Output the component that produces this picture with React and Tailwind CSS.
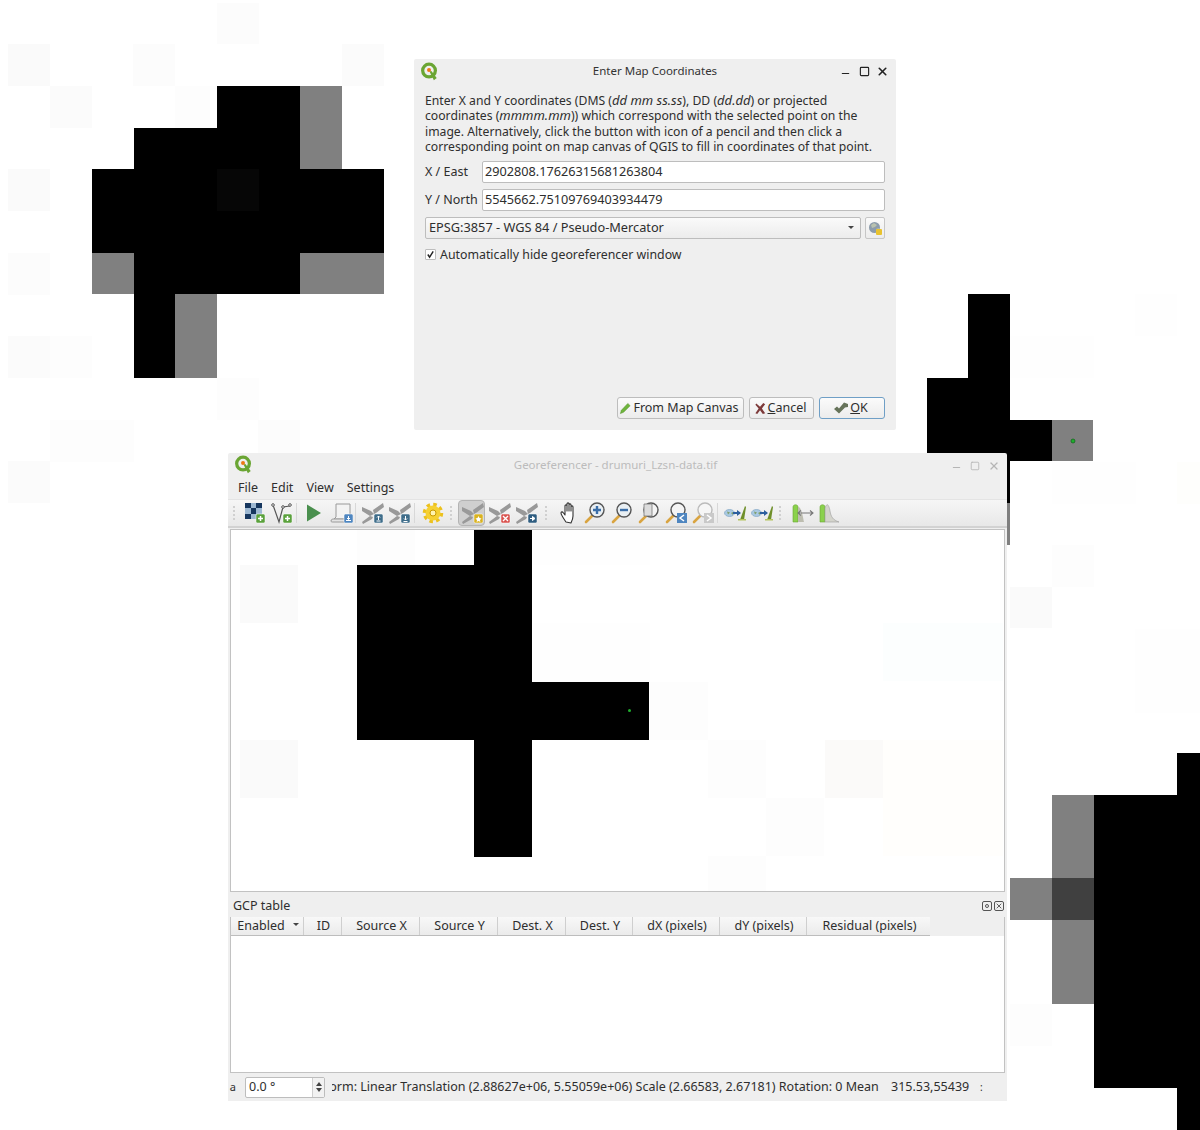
import { X, Minus, Square } from 'lucide-react';

const font = { fontFamily: '"Noto Sans", sans-serif' };

// raster tiles behind the windows: x, y, w, h, colour
const desktopTiles = [
  [8, 44, 42, 42, '#fafafa'], [50, 86, 42, 42, '#fbfbfb'], [133, 44, 42, 42, '#fcfcfc'], [217, 3, 42, 41, '#fcfcfc'],
  [342, 44, 42, 42, '#fbfbfb'], [175, 86, 42, 42, '#fdfdfd'], [8, 169, 42, 42, '#fafafa'], [8, 336, 42, 42, '#fbfbfb'],
  [8, 253, 42, 42, '#fcfcfc'], [50, 336, 42, 42, '#fdfdfd'], [50, 420, 84, 42, '#fdfdfd'], [8, 461, 42, 42, '#fbfbfb'],
  [217, 378, 42, 42, '#fdfdfd'], [258, 420, 42, 33, '#fcfcfc'], [1010, 587, 42, 41, '#fafafa'], [1052, 545, 42, 42, '#fdfdfd'],
  [1010, 336, 84, 42, '#fefefe'], [1135, 294, 42, 42, '#fefefe'], [1052, 462, 84, 42, '#fefefe'], [1177, 462, 23, 42, '#fefefc'],
  [1010, 1004, 42, 42, '#fdfdfd'], [1135, 629, 65, 84, '#fefefe'],
];
const desktopShapes = [
  // left blob
  [217, 86, 83, 42, '#000'], [300, 86, 42, 83, '#808080'], [134, 128, 166, 41, '#000'],
  [92, 169, 292, 84, '#000'], [217, 169, 42, 42, '#060606'], [92, 253, 42, 41, '#808080'],
  [134, 253, 166, 41, '#000'], [300, 253, 84, 41, '#808080'], [134, 294, 41, 84, '#000'],
  [175, 294, 42, 84, '#808080'],
  // middle right blob, partly under the main window
  [968, 294, 42, 209, '#000'], [968, 503, 42, 42, '#808080'], [927, 378, 41, 83, '#000'], [1010, 420, 42, 41, '#000'],
  [1052, 420, 41, 41, '#808080'],
  // bottom right blob
  [1010, 878, 42, 42, '#808080'], [1052, 795, 42, 83, '#808080'], [1052, 878, 42, 42, '#404040'],
  [1052, 920, 42, 84, '#808080'], [1094, 795, 83, 293, '#000'], [1177, 753, 23, 377, '#000'],
];
const canvasTiles = [
  [9, 35, 58, 58, '#fafafa'], [9, 210, 58, 58, '#fafafa'], [126, 0, 58, 35, '#fdfdfd'], [302, 0, 117, 35, '#fefefe'],
  [302, 93, 117, 58, '#fefefe'], [419, 152, 58, 58, '#fdfdfd'], [477, 210, 58, 58, '#fdfdfd'], [594, 210, 58, 58, '#fbfaf9'],
  [652, 93, 120, 58, '#fcfefe'], [652, 210, 120, 116, '#fffefc'], [535, 268, 58, 58, '#fdfdfd'], [477, 326, 58, 35, '#fdfdfd'],
];

function QgisLogo() {
  return (
    <svg viewBox="0 0 20 20" className="w-[19px] h-[19px]">
      <circle cx="9.5" cy="9" r="6.7" fill="none" stroke="#6aa533" strokeWidth="3.4" />
      <path d="M10 10l2-.6 5.6 7.4-3 2.4z" fill="#6aa533" />
      <circle cx="9.5" cy="8.5" r="2.1" fill="#ee7913" />
    </svg>
  );
}

function Badge({ color = '#3d7a9e', children }) {
  return (
    <g>
      <rect x="13" y="13" width="9" height="9" rx="1.5" fill={color} stroke="#fff" strokeWidth="0.5" />
      {children}
    </g>
  );
}

const Plus = () => <path d="M15 17.5h5M17.5 15v5" stroke="#fff" strokeWidth="1.5" />;

function Georef({ color, mark }) {
  return (
    <svg viewBox="0 0 24 24" className="w-[24px] h-[24px]">
      <path d="M1 6l9 4 3 3-4 2-8-5zM1 21l8-6 3 1-1 2-9 5zM12 9L22 2l1 4-8 6-2 1z" fill="#999" />
      <Badge color={color}>{mark}</Badge>
    </svg>
  );
}

function Lens({ children, stroke = '#555', glass = '#e9eff3' }) {
  return (
    <svg viewBox="0 0 24 24" className="w-[24px] h-[24px]">
      <path d="M9 15L3 21" stroke="#d9a441" strokeWidth="2.6" strokeLinecap="round" />
      <circle cx="14" cy="9" r="7" fill={glass} stroke={stroke} strokeWidth="1.4" />
      {children}
    </svg>
  );
}

function LinkIcon() {
  return (
    <svg viewBox="0 0 24 24" className="w-[24px] h-[24px]">
      <ellipse cx="6.500" cy="12" rx="5" ry="3.500" fill="#a9c9e2" stroke="#7fa5c4" strokeWidth="0.7" />
      <path d="M4 10.500l3 1-2 2zM8 12l2-1v3z" fill="#7f9e6a" />
      <path d="M10 12h7" stroke="#2c5f9e" strokeWidth="2" />
      <path d="M14 9l4 3-4 3z" fill="#2c5f9e" />
      <path d="M17 19l5-14 1 1-2 13z" fill="#6f8f2a" />
      <path d="M15 18h8v1.500h-8z" fill="#b5c45e" />
    </svg>
  );
}

const toolbarIcons = {
  raster: (
    <svg viewBox="0 0 24 24" className="w-[24px] h-[24px]">
      <rect x="2" y="2" width="17" height="16" fill="#9db8d2" />
      <path d="M2 2h6v5H2zM13 2h6v5h-6zM8 7h5v6H8zM2 13h6v5H2z" fill="#16365e" />
      <Badge color="#5aa13c"><Plus /></Badge>
    </svg>
  ),
  vector: (
    <svg viewBox="0 0 24 24" className="w-[24px] h-[24px]">
      <path d="M3 4l6 17 4-15 7-1" fill="none" stroke="#555" strokeWidth="1.2" />
      <circle cx="3" cy="4" r="1.300" fill="#fff" stroke="#555" />
      <circle cx="13" cy="6" r="1.300" fill="#fff" stroke="#555" />
      <circle cx="20" cy="4" r="1.300" fill="#fff" stroke="#555" />
      <Badge color="#5aa13c"><Plus /></Badge>
    </svg>
  ),
  play: (
    <svg viewBox="0 0 24 24" className="w-[24px] h-[24px]">
      <path d="M5 3.500l14 8.500-14 8.500z" fill="#4a8f4e" />
    </svg>
  ),
  script: (
    <svg viewBox="0 0 24 24" className="w-[24px] h-[24px]">
      <path d="M7 3h14v15H5l2-2z" fill="#f3f3f3" stroke="#9a9a9a" />
      <path d="M2 20c0-2 2-2 3-2h11v3H4c-1 0-2 0-2-1z" fill="#e4e4e4" stroke="#9a9a9a" />
      <g transform="translate(2 0)">
        <Badge color="#4f86c0"><path d="M15 19.500h5M17.500 15v3.500M16 17l1.500 1.500L19 17" stroke="#fff" strokeWidth="1" fill="none" /></Badge>
      </g>
    </svg>
  ),
  geoUp: <Georef color="#3f6d8a" mark={<path d="M15.500 20h4M17.500 19v-4M16 16.500l1.500-1.500 1.500 1.500" stroke="#fff" strokeWidth="1" fill="none" />} />,
  geoDown: <Georef color="#3f6d8a" mark={<path d="M15.500 20.500h4M17.500 15v4M16 17.500l1.500 1.500 1.500-1.500" stroke="#fff" strokeWidth="1" fill="none" />} />,
  gear: (
    <svg viewBox="0 0 24 24" className="w-[24px] h-[24px]">
      <circle cx="12" cy="12" r="8.500" fill="none" stroke="#ecc11e" strokeWidth="3.500" strokeDasharray="3.500 3.170" />
      <circle cx="12" cy="12" r="7.500" fill="#f5d033" />
      <circle cx="12" cy="12" r="3" fill="#fff4b0" stroke="#c99a00" />
    </svg>
  ),
  geoAdd: <Georef color="#d9b21f" mark={<path d="M17.500 15l1 2 2 .5-1.500 1.500.4 2-1.900-1-1.900 1 .4-2-1.500-1.500 2-.5z" fill="#fff" />} />,
  geoDel: <Georef color="#d9534f" mark={<path d="M15 15l5 5M20 15l-5 5" stroke="#fff" strokeWidth="1.400" />} />,
  geoMove: <Georef color="#2f5d80" mark={<path d="M15 17.500h3M17.500 15.500l2.500 2-2.500 2z" stroke="#fff" fill="#fff" />} />,
  hand: (
    <svg viewBox="0 0 24 24" className="w-[24px] h-[24px]">
      <g transform="translate(2 0)">
        <path d="M8 21c-2-3-5-7-5-9 0-1.500 1.500-1.500 2.500 0L7 14V5c0-1.500 2-1.500 2 0v5-7c0-1.500 2-1.500 2 0v7-6c0-1.500 2-1.500 2 0v6-4c0-1.500 2-1.500 2 0v9c0 3-1 5-2 7z" fill="#fff" stroke="#333" strokeWidth="1.100" strokeLinejoin="round" />
      </g>
    </svg>
  ),
  zoomIn: <Lens><path d="M10 9h8M14 5v8" stroke="#3b6ea8" strokeWidth="2.400" /></Lens>,
  zoomOut: <Lens><path d="M10 9h8" stroke="#3b6ea8" strokeWidth="2.400" /></Lens>,
  zoomFit: (
    <Lens glass="#f4f4f4">
      <path d="M7 3h8v12H7z" fill="#dcdcdc" stroke="#777" strokeWidth="0.8" />
    </Lens>
  ),
  zoomLast: (
    <Lens glass="#f4f4f4">
      <rect x="13" y="12" width="10" height="10" fill="#4f86c0" />
      <path d="M20 14l-4 3 4 3" fill="none" stroke="#fff" strokeWidth="1.500" />
    </Lens>
  ),
  zoomNext: (
    <Lens stroke="#bbb" glass="#f6f6f6">
      <rect x="13" y="12" width="10" height="10" fill="#c9c9c9" />
      <path d="M16 14l4 3-4 3" fill="none" stroke="#fff" strokeWidth="1.500" />
    </Lens>
  ),
  linkA: <LinkIcon />,
  linkB: <LinkIcon />,
  stretch: (
    <svg viewBox="0 0 24 24" className="w-[24px] h-[24px]">
      <path d="M3 21V6c0-3 5-3 5 0v15z" fill="#8bd14c" stroke="#6aa533" strokeWidth="0.6" />
      <path d="M8 6c3-1 5 10 6 15H8z" fill="#bdbdb0" />
      <path d="M8 12h15M11 9.500L8 12l3 2.500M20 9.500l3 2.500-3 2.500" fill="#e8e8e8" stroke="#777" strokeWidth="1.100" />
    </svg>
  ),
  hist: (
    <svg viewBox="0 0 24 24" className="w-[24px] h-[24px]">
      <path d="M3 21V6c0-3 5-3 5 0v15z" fill="#8bd14c" stroke="#6aa533" strokeWidth="0.6" />
      <path d="M8 21V7c2-6 4-3 5 3s3 9 9 11z" fill="#d4d4cc" stroke="#9a9a9a" strokeWidth="0.6" />
    </svg>
  ),
};

function ToolButton({ name, active }) {
  return (
    <div className={`w-[27px] h-[26px] flex items-center justify-center shrink-0 pl-[3px] [&>svg]:shrink-0 ${active ? 'bg-[#cfcfcf] border border-[#b4b4b4] rounded-sm' : ''}`}>
      {toolbarIcons[name]}
    </div>
  );
}

const Grip = ({ width }) => (
  <div className={`h-[26px] flex items-center justify-center shrink-0 ${width}`}>
    <div className="w-0 h-[14px] border-l-2 border-dotted border-[#d0d0d0]" />
  </div>
);

const Separator = ({ width }) => (
  <div className={`h-[26px] flex items-center justify-center shrink-0 ${width}`}>
    <div className="w-px h-[20px] bg-[#d8d8d8]" />
  </div>
);

function TableHead({ width, children, sort }) {
  return (
    <div className={`${width} shrink-0 h-full flex items-center justify-center gap-[8px] pl-[2px] border-r border-[#cfcfcf]`}>
      <span>{children}</span>
      {sort && <span className="w-0 h-0 border-x-[3px] border-x-transparent border-t-[3px] border-t-[#444] -mt-[4px]" />}
    </div>
  );
}

function DialogButton({ width, accent, children }) {
  return (
    <button
      type="button"
      className={`${width} h-[22px] flex items-center justify-center gap-[1px] pr-[3px] rounded-[3px] border bg-gradient-to-b from-[#fbfbfb] to-[#ececec] ${accent ? 'border-[#6f9fc6]' : 'border-[#bdbdbd]'}`}
    >
      {children}
    </button>
  );
}

function CoordRow({ label, value }) {
  return (
    <div className="flex items-center h-[22px]">
      <label className="w-[57px] shrink-0">{label}</label>
      <div className="flex-1 h-full flex items-center px-[2px] bg-white border border-[#bdbdbd] rounded-[2px] text-[12.7px]">{value}</div>
    </div>
  );
}

function CoordinatesDialog() {
  return (
    <section style={font} className="absolute left-[414px] top-[59px] w-[482px] h-[371px] flex flex-col bg-[#efefef] text-[12.5px] leading-[15.4px] text-[#2e2e2e] rounded-[2px]">
      <header className="relative h-[24px] flex items-center justify-center shrink-0 text-[11.5px] text-[#333]">
        <span className="absolute left-[6px] top-[3px]"><QgisLogo /></span>
        Enter Map Coordinates
        <span className="absolute right-[7px] top-[5px] flex items-center text-[#222]">
          <Minus size={11} strokeWidth={2.5} className="mt-[4px] mr-[8px]" />
          <Square size={11} strokeWidth={2.5} className="mr-[6px]" />
          <X size={13} strokeWidth={3} />
        </span>
      </header>
      <div className="flex-1 flex flex-col pt-[10px] pl-[11px] pr-[11px] pb-[11px]">
        <p className="text-[12.2px]">
          Enter X and Y coordinates (DMS (<i className="text-[13px]">dd mm ss.ss</i>), DD (<i className="text-[13px]">dd.dd</i>) or projected coordinates (<i className="text-[13px]">mmmm.mm</i>)) which correspond with the selected point on the image. Alternatively, click the button with icon of a pencil and then click a corresponding point on map canvas of QGIS to fill in coordinates of that point.
        </p>
        <div className="flex flex-col gap-[6px] mt-[6px]">
          <CoordRow label="X / East" value="2902808.17626315681263804" />
          <CoordRow label="Y / North" value="5545662.75109769403934479" />
          <div className="flex items-center gap-[4px] h-[22px]">
            <div className="flex-1 h-full flex items-center justify-between pl-[3px] pr-[6px] border border-[#bdbdbd] rounded-[2px] bg-gradient-to-b from-[#fafafa] to-[#ececec] text-[12.75px]">
              EPSG:3857 - WGS 84 / Pseudo-Mercator
              <span className="w-0 h-0 border-x-[3px] border-x-transparent border-t-[3px] border-t-[#444]" />
            </div>
            <div className="w-[20px] h-full flex items-center justify-center border border-[#c6c6c6] rounded-[2px] bg-gradient-to-b from-[#fafafa] to-[#ececec]">
              <svg viewBox="0 0 14 14" className="w-[14px] h-[14px]">
                <circle cx="6.500" cy="6.500" r="5.500" fill="#8d9cab" />
                <path d="M3 4l3-2 3 2-2 2-3 1zM8 8l3-1-1 3z" fill="#b9c2b0" />
                <rect x="8" y="8" width="6" height="6" rx="1" fill="#e8c22e" />
              </svg>
            </div>
          </div>
        </div>
        <label className="flex items-center gap-[4px] mt-[8px] h-[16px] text-[12.35px]">
          <span className="w-[11px] h-[11px] flex items-center justify-center bg-white border border-[#bdbdbd] rounded-[1px]">
            <svg viewBox="0 0 10 10" className="w-[9px] h-[9px]"><path d="M2 5l2 3 4-6.500" fill="none" stroke="#222" strokeWidth="1.600" /></svg>
          </span>
          Automatically hide georeferencer window
        </label>
        <div className="mt-auto flex justify-end gap-[5px]">
          <DialogButton width="w-[127px]">
            <svg viewBox="0 0 14 14" className="w-[13px] h-[13px]"><path d="M1.500 12.500l1-3.500 7-7.500 2.500 2.500-7 7z" fill="#6fb53c" stroke="#4c8a25" strokeWidth="0.5" /></svg>
            From Map Canvas
          </DialogButton>
          <DialogButton width="w-[65px]">
            <svg viewBox="0 0 14 14" className="w-[13px] h-[13px]"><path d="M2.500 1.500L6.500 5 10 1l2 1.500L8.500 7l3.500 5-2.500 1L6.500 9 3.500 13 1.500 12l3.500-5L1.500 3z" fill="#7d3a3a" /></svg>
            <span><u>C</u>ancel</span>
          </DialogButton>
          <DialogButton width="w-[66px]" accent>
            <svg viewBox="0 0 16 14" className="w-[16px] h-[14px]"><path d="M1 8l3-2.500 2 2L11 1.500l4 1.500v3l-3 .5-6 6z" fill="#66735a" /></svg>
            <span><u>O</u>K</span>
          </DialogButton>
        </div>
      </div>
    </section>
  );
}

function GeoreferencerWindow() {
  return (
    <section style={font} className="absolute left-[228px] top-[453px] w-[779px] h-[648px] flex flex-col bg-[#efefef] text-[12.5px] text-[#2e2e2e] rounded-t-[2px]">
      <header className="relative h-[24px] flex items-center justify-center shrink-0 text-[11.5px] text-[#bcbcbc]">
        <span className="absolute left-[6px] top-[2px]"><QgisLogo /></span>
        <span className="-ml-[4px]">Georeferencer - drumuri_Lzsn-data.tif</span>
        <span className="absolute right-[7px] top-[5px] flex items-center gap-[8px] text-[#b5b5b5]">
          <Minus size={11} strokeWidth={2.2} className="mt-[4px]" />
          <Square size={10} strokeWidth={2} />
          <X size={12} strokeWidth={2.5} />
        </span>
      </header>
      <nav className="h-[22px] flex items-center gap-[13px] pl-[10px] shrink-0">
        <span>File</span><span>Edit</span><span>View</span><span>Settings</span>
      </nav>
      <div className="h-[29px] flex items-center shrink-0 border-t border-[#e4e4e4] bg-gradient-to-b from-[#f6f6f6] to-[#e8e8e8] border-b-2 border-b-[#d2d2d2]">
        <Grip width="w-[11.5px]" />
        <ToolButton name="raster" /><ToolButton name="vector" />
        <Separator width="w-[5px]" />
        <ToolButton name="play" /><ToolButton name="script" />
        <Separator width="w-[5px]" />
        <ToolButton name="geoUp" /><ToolButton name="geoDown" />
        <Separator width="w-[6px]" />
        <ToolButton name="gear" />
        <Grip width="w-[13px]" />
        <ToolButton name="geoAdd" active /><ToolButton name="geoDel" /><ToolButton name="geoMove" />
        <Grip width="w-[14px]" />
        <ToolButton name="hand" /><ToolButton name="zoomIn" /><ToolButton name="zoomOut" /><ToolButton name="zoomFit" /><ToolButton name="zoomLast" /><ToolButton name="zoomNext" />
        <Separator width="w-[5px]" />
        <ToolButton name="linkA" /><ToolButton name="linkB" />
        <Grip width="w-[13px]" />
        <ToolButton name="stretch" /><ToolButton name="hist" />
      </div>

      <div className="h-[363px] mx-[2px] mt-[1px] shrink-0 border border-[#c2c2c2] bg-white overflow-hidden">
        <svg width="772" height="361" className="block" shapeRendering="crispEdges">
          {canvasTiles.map(([x, y, w, h, c], i) => <rect key={i} x={x} y={y} width={w} height={h} fill={c} />)}
          <rect x="243" y="0" width="58" height="327" fill="#000" />
          <rect x="126" y="35" width="117" height="175" fill="#000" />
          <rect x="301" y="152" width="117" height="58" fill="#000" />
          <circle cx="398.500" cy="180.500" r="1.500" fill="#1fae2d" shapeRendering="auto" />
        </svg>
      </div>

      <div className="h-[25px] flex items-center justify-between pl-[5px] pr-[3px] pt-[4px] shrink-0">
        <span>GCP table</span>
        <span className="flex gap-[2px] -mt-[2px]">
          <span className="w-[10px] h-[10px] border border-[#555] rounded-[2px] flex items-center justify-center"><span className="w-[4px] h-[4px] border border-[#555] rounded-full" /></span>
          <span className="w-[10px] h-[10px] border border-[#555] rounded-[2px] flex items-center justify-center"><X size={8} strokeWidth={2.5} className="text-[#444]" /></span>
        </span>
      </div>

      <div className="h-[156px] mx-[2px] shrink-0 border border-[#c2c2c2] border-t-0 bg-white flex flex-col">
        <div className="h-[19px] flex bg-[#efefef] shrink-0">
          <div className="flex h-full bg-gradient-to-b from-[#f8f8f8] to-[#ebebeb] border-b border-[#bdbdbd]">
            <TableHead width="w-[73px]" sort>Enabled</TableHead>
            <TableHead width="w-[38px]">ID</TableHead>
            <TableHead width="w-[78px]">Source X</TableHead>
            <TableHead width="w-[78px]">Source Y</TableHead>
            <TableHead width="w-[68px]">Dest. X</TableHead>
            <TableHead width="w-[67px]">Dest. Y</TableHead>
            <TableHead width="w-[87px]">dX (pixels)</TableHead>
            <TableHead width="w-[87px]">dY (pixels)</TableHead>
            <div className="w-[123px] flex items-center justify-center pl-[2px]">Residual (pixels)</div>
          </div>
        </div>
      </div>

      <footer className="flex-1 flex items-center relative">
        <span className="w-[17px] shrink-0 overflow-hidden flex justify-end pr-[9px] text-[11px]">a</span>
        <div className="w-[80px] h-[21px] shrink-0 flex items-center justify-between pl-[3px] bg-white border border-[#bdbdbd] rounded-[2px]">
          0.0 °
          <span className="w-[12px] h-full border-l border-[#cfcfcf] flex flex-col items-center justify-center gap-[2px] bg-[#f2f2f2]">
            <span className="w-0 h-0 border-x-[3px] border-x-transparent border-b-[4px] border-b-[#444]" />
            <span className="w-0 h-0 border-x-[3px] border-x-transparent border-t-[4px] border-t-[#444]" />
          </span>
        </div>
        <div className="w-[550px] ml-[7px] shrink-0 overflow-hidden whitespace-nowrap">
          <span className="inline-block -ml-[39px]">Transform: Linear Translation (2.88627e+06, 5.55059e+06) Scale (2.66583, 2.67181) Rotation: 0 Mean error: 0</span>
        </div>
        <div className="w-[80px] ml-[9px] shrink-0 overflow-hidden whitespace-nowrap">315.53,55439</div>
        <span className="ml-[9px] text-[10px]">:</span>
      </footer>
    </section>
  );
}

export default function App() {
  return (
    <div className="relative w-[1200px] h-[1130px] bg-white overflow-hidden">
      <svg width="1200" height="1130" className="block" shapeRendering="crispEdges">
        {desktopTiles.map(([x, y, w, h, c], i) => <rect key={i} x={x} y={y} width={w} height={h} fill={c} />)}
        {desktopShapes.map(([x, y, w, h, c], i) => <rect key={i} x={x} y={y} width={w} height={h} fill={c} />)}
        <circle cx="1073" cy="441" r="2" fill="#1fae2d" stroke="#0f5f18" strokeWidth="0.7" shapeRendering="auto" />
      </svg>
      <CoordinatesDialog />
      <GeoreferencerWindow />
    </div>
  );
}
